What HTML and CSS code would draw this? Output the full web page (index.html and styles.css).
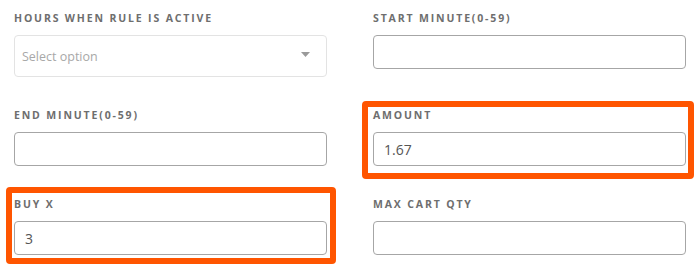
FILE: index.html
```html
<!DOCTYPE html>
<html>
<head>
<meta charset="utf-8">
<link rel="stylesheet" href="styles.css">
</head>
<body>
<div class="form">
  <div class="field">
    <label class="label">Hours when rule is active</label>
    <div class="select">
      <span class="placeholder">Select option</span>
      <svg class="caret" width="9" height="5" viewBox="0 0 9 5"><path d="M0 0h9L4.5 5z" fill="#9a9a9a"/></svg>
    </div>
  </div>
  <div class="field">
    <label class="label">Start Minute(0-59)</label>
    <div class="input"></div>
  </div>
  <div class="field">
    <label class="label">End Minute(0-59)</label>
    <div class="input"></div>
  </div>
  <div class="field">
    <label class="label">Amount</label>
    <div class="input">1.67</div>
    <div class="highlight highlight-amount"></div>
  </div>
  <div class="field">
    <label class="label">Buy X</label>
    <div class="input">3</div>
    <div class="highlight highlight-buy"></div>
  </div>
  <div class="field">
    <label class="label">Max Cart Qty</label>
    <div class="input"></div>
  </div>
</div>
</body>
</html>
```

FILE: styles.css
```css
html, body {
  margin: 0;
  background: #ffffff;
}
body {
  min-height: 271px;
  font-family: "Open Sans", "Liberation Sans", sans-serif;
}
.form {
  display: grid;
  grid-template-columns: 313px 313px;
  column-gap: 46px;
  row-gap: 31px;
  padding: 11px 12px 17px 14px;
}
.field {
  position: relative;
  display: flex;
  flex-direction: column;
}
.label {
  display: block;
  height: 14px;
  line-height: 14px;
  margin-bottom: 10px;
  font-size: 10.5px;
  font-weight: 700;
  letter-spacing: 1.85px;
  text-transform: uppercase;
  color: #6e6e6e;
}
.select {
  box-sizing: border-box;
  height: 42px;
  border: 1px solid #e3e3e3;
  border-radius: 4px;
  display: flex;
  align-items: center;
  justify-content: space-between;
  padding: 0 16px 0 7px;
}
.placeholder {
  font-size: 12.5px;
  color: #a8a8a8;
}
.caret {
  margin-top: -4px;
}
.input {
  box-sizing: border-box;
  height: 34px;
  border: 1px solid #a6a6a6;
  border-radius: 4px;
  padding: 0 10px;
  display: flex;
  align-items: center;
  font-size: 14px;
  color: #555555;
}
.highlight {
  position: absolute;
  border: 6px solid #ff5500;
  border-radius: 4px;
  pointer-events: none;
}
.highlight-amount {
  left: -11px;
  right: -8px;
  top: -7px;
  bottom: -13px;
}
.highlight-buy {
  left: -8px;
  right: -9px;
  top: -10px;
  bottom: -9px;
}
```
